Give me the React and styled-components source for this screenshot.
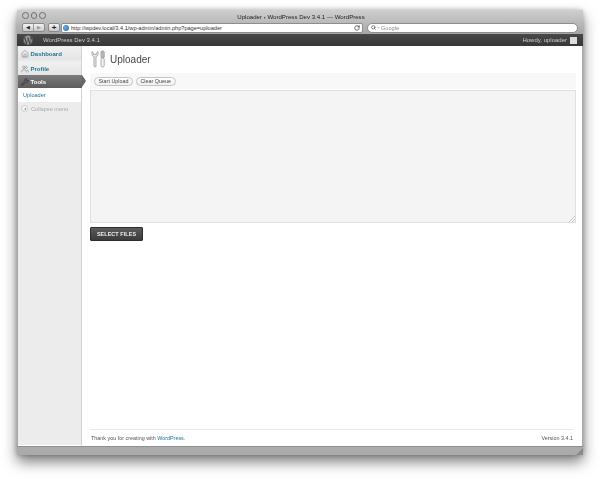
import styled, { createGlobalStyle } from 'styled-components'
import { FaWordpress } from 'react-icons/fa'
import { Home, Users, Wrench, ChevronDown, RotateCw, Search } from 'lucide-react'

const GlobalStyle = createGlobalStyle`
  html, body {
    margin: 0;
    padding: 0;
    background: #fff;
    font-family: "Liberation Sans", Arial, sans-serif;
  }
`

const Page = styled.div`
  width: 600px;
  height: 479px;
  box-sizing: border-box;
  padding: 10px 17px 0;
  overflow: hidden;
`

const Browser = styled.div`
  height: 445px;
  display: flex;
  flex-direction: column;
  border-radius: 3px 3px 0 0;
  background: #a9a9a9;
  box-shadow: 0 7px 14px rgba(0, 0, 0, 0.5), 0 0 5px rgba(0, 0, 0, 0.25);
  filter: blur(0.3px);
`

const Chrome = styled.div`
  height: 24px;
  flex: none;
  box-sizing: border-box;
  padding: 1px 3px 0 5px;
  background: linear-gradient(#cfcfcf, #a6a6a6);
  border-radius: 3px 3px 0 0;
`

const TitleRow = styled.div`
  height: 10px;
  display: flex;
  align-items: center;
  position: relative;
  justify-content: center;
`

const Lights = styled.div`
  position: absolute;
  left: 0;
  top: 1px;
  display: flex;
  gap: 2px;
`

const Light = styled.span`
  width: 6.5px;
  height: 6.5px;
  box-sizing: border-box;
  border-radius: 50%;
  border: 1px solid #6f6f6f;
  background: #c4c4c4;
`

const Title = styled.div`
  font-size: 6.1px;
  color: #222;
`

const ToolRow = styled.div`
  height: 11px;
  margin-top: 1px;
  display: flex;
  align-items: center;
`

const NavGroup = styled.div`
  display: flex;
  width: 23px;
  height: 9px;
  border: 1px solid #8a8a8a;
  border-radius: 2px;
  background: linear-gradient(#f4f4f4, #c9c9c9);
  box-sizing: border-box;
`

const NavButton = styled.span`
  flex: 1;
  display: flex;
  align-items: center;
  justify-content: center;
  color: ${p => (p.$off ? '#999' : '#222')};
  font-size: 5px;
  line-height: 1;
  & + & {
    border-left: 1px solid #999;
  }
`

const PlusButton = styled(NavGroup)`
  width: 12px;
  margin-left: 3px;
  justify-content: center;
  align-items: center;
  font-size: 8px;
  font-weight: bold;
  color: #222;
  line-height: 1;
`

const UrlField = styled.div`
  width: 302px;
  height: 10px;
  margin-left: 1px;
  box-sizing: border-box;
  display: flex;
  align-items: center;
  gap: 2px;
  padding: 0 2px 0 1px;
  background: #fff;
  border: 1px solid #8d8d8d;
  border-radius: 2px;
  font-size: 5.6px;
  color: #333;
  white-space: nowrap;
`

const Globe = styled.span`
  width: 6px;
  height: 6px;
  flex: none;
  border-radius: 50%;
  background: radial-gradient(circle at 40% 40%, #6db0ea, #1f5fa8);
`

const Reload = styled(RotateCw)`
  margin-left: auto;
  color: #444;
`

const SearchField = styled(UrlField)`
  width: 211px;
  margin-left: 4px;
  padding-left: 3px;
  gap: 1px;
  border-radius: 5px;
  color: #8a8a8a;
`

const AdminBar = styled.div`
  height: 12px;
  flex: none;
  box-sizing: border-box;
  padding: 0 6px;
  display: flex;
  align-items: center;
  background: linear-gradient(#494949, #373737);
  color: #ccc;
  font-size: 6px;
`

const SiteName = styled.span`
  margin-left: 10px;
`

const Howdy = styled.span`
  margin-left: auto;
`

const Avatar = styled.span`
  width: 7px;
  height: 7px;
  margin-left: 3px;
  background: #ddd;
`

const Body = styled.div`
  flex: 1;
  min-height: 0;
  display: flex;
  margin: 0 1px;
`

const Sidebar = styled.aside`
  width: 63px;
  flex: none;
  background: #ececec;
  border-right: 1px solid #d2d2d2;
  border-bottom: 1px solid #fff;
  padding-top: 1px;
`

const MenuItem = styled.div`
  height: 13px;
  box-sizing: border-box;
  padding-left: 3px;
  display: flex;
  align-items: center;
  gap: 1.5px;
  font-size: 6px;
  font-weight: bold;
  color: #21759b;
  background: linear-gradient(#f1f1f1, #e4e4e4);
  margin-bottom: ${p => p.$gap || 0}px;
  svg {
    color: #8c8c8c;
    flex: none;
  }
`

const ActiveItem = styled(MenuItem)`
  position: relative;
  width: 64px;
  color: #fff;
  background: linear-gradient(#7b7b7b, #5c5c5c);
  svg {
    color: #2e2e2e;
  }
  &::after {
    content: '';
    position: absolute;
    left: 100%;
    top: 0;
    border-style: solid;
    border-width: 6.5px 0 6.5px 4px;
    border-color: transparent transparent transparent #666;
  }
`

const SubItem = styled.div`
  height: 14px;
  box-sizing: border-box;
  padding-left: 5px;
  display: flex;
  align-items: center;
  background: #fff;
  color: #21759b;
  font-size: 5.6px;
`

const Collapse = styled.div`
  margin: 3px 0 0 3px;
  display: flex;
  align-items: center;
  gap: 3px;
  color: #aaa;
  font-size: 5.6px;
`

const CollapseDot = styled.span`
  width: 7px;
  height: 7px;
  box-sizing: border-box;
  display: flex;
  align-items: center;
  justify-content: center;
  border: 1px solid #ccc;
  border-radius: 50%;
  background: #f6f6f6;
  color: #888;
  font-size: 4px;
`

const Main = styled.main`
  flex: 1;
  min-width: 0;
  display: flex;
  flex-direction: column;
  background: #fff;
  padding: 0 6px 0 8px;
`

const Heading = styled.div`
  height: 27px;
  display: flex;
  align-items: center;
  gap: 4px;
  padding: 0 0 1px 1px;
  box-sizing: border-box;
`

const PageTitle = styled.h2`
  margin: 0;
  font-size: 10px;
  font-weight: normal;
  color: #464646;
`

const ButtonPanel = styled.div`
  height: 16px;
  box-sizing: border-box;
  display: flex;
  align-items: center;
  gap: 3px;
  padding: 1px 0 0 4px;
  background: #f8f8f8;
`

const PillButton = styled.button`
  height: 9px;
  box-sizing: border-box;
  padding: 0 3.5px;
  border: 1px solid #c4c4c4;
  border-radius: 5px;
  background: linear-gradient(#fff, #f0f0f0);
  color: #464646;
  font: 5.4px "Liberation Sans", Arial, sans-serif;
  line-height: 1;
`

const Editor = styled.div`
  height: 133px;
  margin-top: 1px;
  box-sizing: border-box;
  position: relative;
  background: #f4f4f4;
  border: 1px solid #e0e0e0;
`

const Grip = styled.svg`
  position: absolute;
  right: 0;
  bottom: 0;
`

const SelectFiles = styled.button`
  width: 53px;
  height: 14px;
  margin: 4px 0 0 0;
  padding: 0;
  border: 1px solid #2c2c2c;
  border-radius: 1px;
  background: linear-gradient(#5a5a5a, #3b3b3b);
  color: #eee;
  font: bold 5.4px "Liberation Sans", Arial, sans-serif;
  letter-spacing: 0.1px;
`

const Footer = styled.footer`
  margin: auto 3px 0 0;
  height: 17px;
  box-sizing: border-box;
  border-top: 1px solid #e8e8e8;
  display: flex;
  align-items: center;
  justify-content: space-between;
  padding-left: 1px;
  font-size: 5.4px;
  color: #555;
`

const FooterLink = styled.span`
  color: #21759b;
`

const StatusBar = styled.div`
  height: 9px;
  flex: none;
  position: relative;
  border-top: 1px solid #8f8f8f;
  box-sizing: border-box;
  background: #ababab;
`

const Corner = styled.svg`
  position: absolute;
  right: 0;
  bottom: 0;
`

function ToolsIcon() {
  return (
    <svg width="15" height="18" viewBox="0 0 15 18" fill="#ececec" stroke="#9a9a9a" strokeWidth="0.8">
      <path d="M1 1.5 V4.5 Q1 6 3 6.5 V16 Q3 17 4 17 Q5 17 5 16 V6.5 Q7 6 7 4.5 V1.5 L5.4 3 V4.4 H2.6 V3 Z" />
      <rect x="10" y="1" width="3.2" height="7" rx="1" fill="#bbb" />
      <rect x="10" y="8" width="3.2" height="9" rx="1.4" fill="#f3f3f3" />
    </svg>
  )
}

export default function App() {
  return (
    <Page>
      <GlobalStyle />
      <Browser>
        <Chrome>
          <TitleRow>
            <Lights>
              <Light />
              <Light />
              <Light />
            </Lights>
            <Title>Uploader ‹ WordPress Dev 3.4.1 — WordPress</Title>
          </TitleRow>
          <ToolRow>
            <NavGroup>
              <NavButton>◀</NavButton>
              <NavButton $off>▶</NavButton>
            </NavGroup>
            <PlusButton>+</PlusButton>
            <UrlField>
              <Globe />
              http://wpdev.local/3.4.1/wp-admin/admin.php?page=uploader
              <Reload size={6} strokeWidth={3} />
            </UrlField>
            <SearchField>
              <Search size={5} strokeWidth={3} color="#444" />
              <ChevronDown size={3} strokeWidth={3} color="#444" />
              Google
            </SearchField>
          </ToolRow>
        </Chrome>
        <AdminBar>
          <FaWordpress size={10} color="#999" />
          <SiteName>WordPress Dev 3.4.1</SiteName>
          <Howdy>Howdy, uploader</Howdy>
          <Avatar />
        </AdminBar>
        <Body>
          <Sidebar>
            <MenuItem $gap={2}>
              <Home size={8} />
              Dashboard
            </MenuItem>
            <MenuItem>
              <Users size={8} />
              Profile
            </MenuItem>
            <ActiveItem>
              <Wrench size={8} />
              Tools
            </ActiveItem>
            <SubItem>Uploader</SubItem>
            <Collapse>
              <CollapseDot>◂</CollapseDot>
              Collapse menu
            </Collapse>
          </Sidebar>
          <Main>
            <Heading>
              <ToolsIcon />
              <PageTitle>Uploader</PageTitle>
            </Heading>
            <ButtonPanel>
              <PillButton>Start Upload</PillButton>
              <PillButton>Clear Queue</PillButton>
            </ButtonPanel>
            <Editor>
              <Grip width="6" height="6" viewBox="0 0 6 6" stroke="#bbb" strokeWidth="0.8">
                <path d="M0 6 L6 0 M3 6 L6 3" />
              </Grip>
            </Editor>
            <SelectFiles>SELECT FILES</SelectFiles>
            <Footer>
              <span>
                Thank you for creating with <FooterLink>WordPress</FooterLink>.
              </span>
              <span>Version 3.4.1</span>
            </Footer>
          </Main>
        </Body>
        <StatusBar>
          <Corner width="7" height="7" viewBox="0 0 7 7">
            <path d="M0 7 L7 0 V7 Z" fill="#8a8a8a" />
          </Corner>
        </StatusBar>
      </Browser>
    </Page>
  )
}
